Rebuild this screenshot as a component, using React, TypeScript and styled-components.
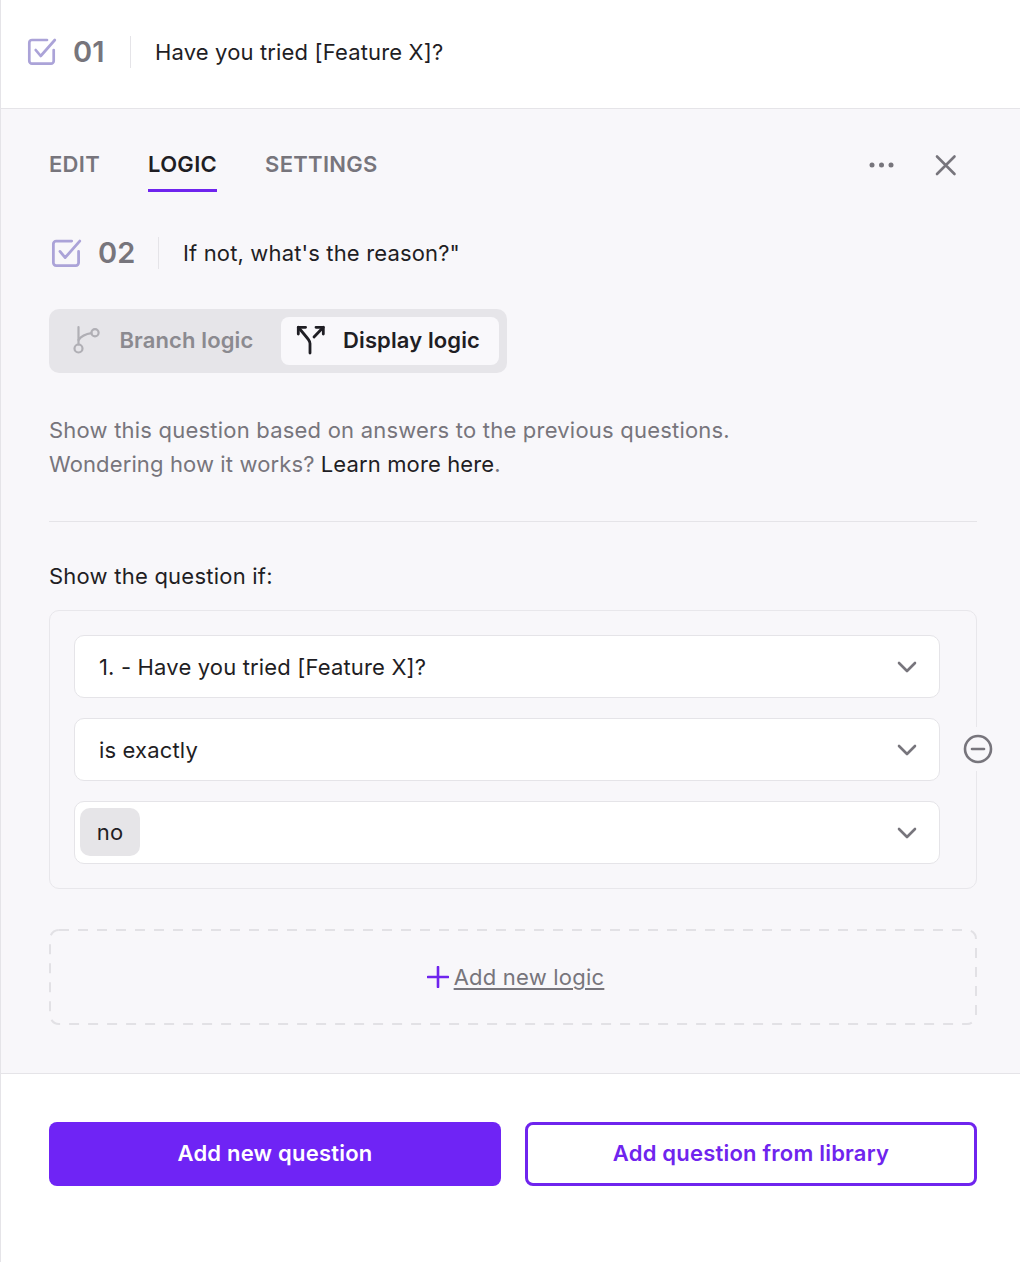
import React from "react";
import styled, { createGlobalStyle } from "styled-components";

const Global = createGlobalStyle`
  html, body { margin: 0; padding: 0; background: #fff; }
  body { font-family: "Inter", "Liberation Sans", sans-serif; -webkit-font-smoothing: antialiased; }
  * { box-sizing: border-box; }
`;

const Page = styled.div`
  width: 1020px;
  height: 1262px;
  border-left: 1px solid #e5e4e8;
  display: flex;
  flex-direction: column;
  background: #fff;
  overflow: hidden;
`;

const TopRow = styled.div`
  height: 109px;
  flex: none;
  padding: 0 0 5px 26px;
  display: flex;
  align-items: center;
  border-bottom: 1px solid #e5e4e8;
`;

const Panel = styled.div`
  height: 965px;
  flex: none;
  background: #f8f7fa;
  border-bottom: 1px solid #e5e4e8;
  padding: 0 43px 0 48px;
  display: flex;
  flex-direction: column;
`;

const QuestionHead = styled.div`
  display: flex;
  align-items: center;
  height: 32px;
`;

const CheckIcon = styled.svg<{ $size: number }>`
  width: ${(p) => p.$size}px;
  height: ${(p) => p.$size}px;
  flex: none;
`;

const QNumber = styled.span<{ $width: number }>`
  font-size: 29px;
  font-weight: 600;
  color: #77757c;
  margin-left: 16px;
  width: ${(p) => p.$width}px;
  line-height: 32px;
`;

const QDivider = styled.span`
  width: 1px;
  height: 32px;
  background: #e5e4e8;
  flex: none;
  margin-right: 24px;
`;

const QText = styled.span`
  font-size: 22px;
  color: #1f1e24;
  letter-spacing: 0.15px;
  white-space: nowrap;
`;

const TabBar = styled.div`
  display: flex;
  align-items: flex-start;
  height: 83px;
  padding-top: 38px;
  flex: none;
`;

const Tab = styled.div<{ $active?: boolean }>`
  height: 45px;
  font-size: 22px;
  line-height: 35px;
  font-weight: 600;
  letter-spacing: 0.3px;
  margin-right: 48px;
  color: ${(p) => (p.$active ? "#1f1e24" : "#77757c")};
  border-bottom: 3px solid ${(p) => (p.$active ? "#6f24ee" : "transparent")};
`;

const TabActions = styled.div`
  margin-left: auto;
  display: flex;
  align-items: center;
  height: 35px;
  gap: 40px;
  padding-right: 20px;
`;

const SecondHead = styled(QuestionHead)`
  margin-top: 45px;
  padding-left: 2px;
`;

const Toggle = styled.div`
  margin-top: 40px;
  width: 458px;
  height: 64px;
  background: #e6e5e9;
  border-radius: 10px;
  padding: 8px;
  display: flex;
  align-items: stretch;
  flex: none;
`;

const ToggleOption = styled.div<{ $active?: boolean }>`
  display: flex;
  align-items: center;
  border-radius: 8px;
  font-size: 22px;
  font-weight: 600;
  letter-spacing: 0.12px;
  white-space: nowrap;
  padding-bottom: 2px;
  width: ${(p) => (p.$active ? "218px" : "224px")};
  padding-left: ${(p) => (p.$active ? "15px" : "14px")};
  gap: ${(p) => (p.$active ? "17px" : "18.5px")};
  background: ${(p) => (p.$active ? "#f9f8fb" : "transparent")};
  color: ${(p) => (p.$active ? "#1f1e24" : "#8b8a90")};
`;

const Description = styled.p`
  margin: 40px 0 0;
  font-size: 22px;
  line-height: 34px;
  color: #77757c;
  letter-spacing: 0.21px;
  white-space: nowrap;
`;

const DescriptionTail = styled.span`
  letter-spacing: 0.12px;
`;

const Strong = styled.span`
  color: #1f1e24;
`;

const Rule = styled.div`
  height: 1px;
  background: #e5e4e8;
  margin-top: 40px;
  flex: none;
`;

const SectionLabel = styled.div`
  margin-top: 37px;
  font-size: 22px;
  line-height: 34px;
  color: #1f1e24;
  letter-spacing: 0.23px;
`;

const LogicBox = styled.div`
  position: relative;
  margin-top: 17px;
  height: 279px;
  border: 1px solid #e8e7eb;
  border-radius: 10px;
  padding: 24px 36px 24px 24px;
  display: flex;
  flex-direction: column;
  gap: 20px;
  flex: none;
`;

const Select = styled.div`
  height: 63px;
  flex: none;
  background: #fff;
  border: 1px solid #e5e4e8;
  border-radius: 10px;
  display: flex;
  align-items: center;
  padding: 0 21px 0 24px;
  font-size: 22px;
  color: #1f1e24;
  letter-spacing: 0.16px;
`;

const ChipSelect = styled(Select)`
  padding-left: 5px;
`;

const Chip = styled.span`
  width: 60px;
  height: 48px;
  margin-bottom: 2px;
  border-radius: 10px;
  background: #e6e5e8;
  display: flex;
  align-items: center;
  justify-content: center;
`;

const Chevron = styled.svg`
  width: 22px;
  height: 14px;
  margin-left: auto;
  flex: none;
`;

const RemoveButton = styled.div`
  position: absolute;
  right: -20px;
  top: 116px;
  width: 36px;
  height: 44px;
  display: flex;
  align-items: center;
  justify-content: center;
  background: #f8f7fa;
`;

const AddLogicWrap = styled.div`
  position: relative;
  margin-top: 40px;
  flex: none;
`;

const AddLogic = styled.div`
  height: 96px;
  display: flex;
  align-items: center;
  justify-content: center;
  gap: 5px;
  font-size: 22px;
  color: #77757c;
  padding-left: 5px;
`;

const DashedFrame = styled.svg`
  position: absolute;
  inset: 0;
  width: 100%;
  height: 100%;
  pointer-events: none;
`;

const AddLink = styled.span`
  text-decoration: underline;
  text-underline-offset: 3px;
  text-decoration-thickness: 1.5px;
  letter-spacing: 0.22px;
`;

const Footer = styled.div`
  display: grid;
  grid-template-columns: 452px 452px;
  gap: 24px;
  padding: 48px 0 0 48px;
`;

const Button = styled.button<{ $outline?: boolean }>`
  height: 64px;
  border-radius: 8px;
  font: 600 22px "Inter", "Liberation Sans", sans-serif;
  letter-spacing: 0.22px;
  color: ${(p) => (p.$outline ? "#6f24ee" : "#fff")};
  background: ${(p) => (p.$outline ? "#fff" : "#6f24f5")};
  border: ${(p) => (p.$outline ? "3px solid #6f24ee" : "none")};
  padding: 0 0 2px;
`;

const Check = ({ size }: { size: number }) => (
  <CheckIcon $size={size} viewBox="0 0 30 30" fill="none" stroke="#aba3d8" strokeWidth="2.7" strokeLinecap="round" strokeLinejoin="round">
    <path d="M26.7 13v11a2.7 2.7 0 0 1-2.7 2.7H5A2.7 2.7 0 0 1 2.3 24V5.7A2.7 2.7 0 0 1 5 3h15" />
    <path d="M8.7 13l5 6L27.8 3" />
  </CheckIcon>
);

const Down = () => (
  <Chevron viewBox="0 0 22 14" fill="none" stroke="#77757c" strokeWidth="2.6" strokeLinecap="round" strokeLinejoin="round">
    <path d="M3 3l8 8 8-8" />
  </Chevron>
);

export default function App() {
  return (
    <Page>
      <Global />
      <TopRow>
        <Check size={30} />
        <QNumber $width={57}>01</QNumber>
        <QDivider />
        <QText>Have you tried [Feature X]?</QText>
      </TopRow>
      <Panel>
        <TabBar>
          <Tab>EDIT</Tab>
          <Tab $active>LOGIC</Tab>
          <Tab>SETTINGS</Tab>
          <TabActions>
            <svg width="26" height="8" viewBox="0 0 26 8" fill="#77757c">
              <circle cx="3" cy="4" r="2.5" />
              <circle cx="12.5" cy="4" r="2.5" />
              <circle cx="22" cy="4" r="2.5" />
            </svg>
            <svg width="22" height="22" viewBox="0 0 22 22" fill="none" stroke="#77757c" strokeWidth="2.6" strokeLinecap="round">
              <path d="M2 2.5l17.5 17.5M19.5 2.5L2 20" />
            </svg>
          </TabActions>
        </TabBar>
        <SecondHead>
          <Check size={31} />
          <QNumber $width={60}>02</QNumber>
          <QDivider />
          <QText>If not, what's the reason?"</QText>
        </SecondHead>
        <Toggle>
          <ToggleOption>
            <svg width="30" height="30" viewBox="0 0 30 30" fill="none" stroke="#b0afb5" strokeWidth="2.2" strokeLinecap="round">
              <circle cx="7.5" cy="23.5" r="4" />
              <circle cx="24" cy="7.7" r="3.6" />
              <path d="M7.5 19.5V2" />
              <path d="M7.5 15c2.5-3.5 7-6 13-6.8" />
            </svg>
            Branch logic
          </ToggleOption>
          <ToggleOption $active>
            <svg width="30" height="30" viewBox="0 0 30 30" fill="none" stroke="#1f1e24" strokeWidth="2.8" strokeLinecap="round" strokeLinejoin="round">
              <path d="M14 28V18.5C14 16 13 15 2.3 2.3" />
              <path d="M18 12L27.3 2.3" />
              <path d="M2.3 9V2.3h7.3" />
              <path d="M20 2.3h7.3V9" />
            </svg>
            Display logic
          </ToggleOption>
        </Toggle>
        <Description>
          Show this question based on answers to the previous questions.
          <br />
          <DescriptionTail>
            Wondering how it works? <Strong>Learn more here</Strong>.
          </DescriptionTail>
        </Description>
        <Rule />
        <SectionLabel>Show the question if:</SectionLabel>
        <LogicBox>
          <Select>
            1. - Have you tried [Feature X]?
            <Down />
          </Select>
          <Select>
            is exactly
            <Down />
          </Select>
          <ChipSelect>
            <Chip>no</Chip>
            <Down />
          </ChipSelect>
          <RemoveButton>
            <svg width="30" height="30" viewBox="0 0 30 30" fill="none" stroke="#77757c" strokeWidth="2.6" strokeLinecap="round">
              <circle cx="15" cy="15" r="13" />
              <path d="M9 15h12" />
            </svg>
          </RemoveButton>
        </LogicBox>
        <AddLogicWrap>
          <DashedFrame>
            <rect x="1" y="1" width="926" height="94" rx="9" fill="none" stroke="#e2e1e5" strokeWidth="2" strokeDasharray="10 9" />
          </DashedFrame>
          <AddLogic>
            <svg width="22" height="22" viewBox="0 0 22 22" fill="none" stroke="#6f24ee" strokeWidth="2.6" strokeLinecap="round">
              <path d="M11 1v20M1 11h20" />
            </svg>
            <AddLink>Add new logic</AddLink>
          </AddLogic>
        </AddLogicWrap>
      </Panel>
      <Footer>
        <Button>Add new question</Button>
        <Button $outline>Add question from library</Button>
      </Footer>
    </Page>
  );
}
